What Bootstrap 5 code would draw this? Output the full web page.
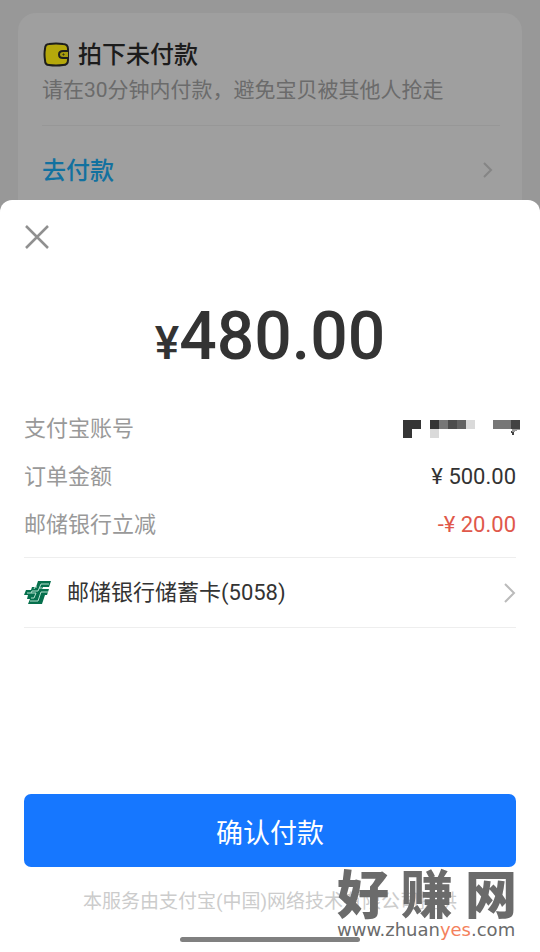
<!DOCTYPE html>
<html lang="zh-CN">
<head>
<meta charset="utf-8">
<meta name="viewport" content="width=device-width, initial-scale=1">
<title>确认付款</title>
<link href="https://cdn.jsdelivr.net/npm/bootstrap@5.3.0/dist/css/bootstrap.min.css" rel="stylesheet">
<style>
  body { background: #989898; font-family: Roboto, "Noto Sans CJK SC", sans-serif; color: #333; }
  svg { display: block; flex: none; }
  .order-card { background: #9f9f9f; border-radius: 18px; margin: 13px 18px 0; padding: 25px 22px 30px 24px; }
  .order-title { font-size: 24px; line-height: 34px; font-weight: 500; color: #1c1c1c; gap: 8px; }
  .order-note { font-size: 21px; line-height: 36px; color: #6b6b6b; border-bottom: 1px solid #979797; padding-bottom: 17px; }
  .order-link { font-size: 24px; line-height: 36px; font-weight: 500; color: #12719f; padding-top: 27px; }
  .pay-sheet { background: #fff; border-radius: 12px 12px 0 0; margin-top: -19px; padding: 24px 24px 10px; }
  .close-btn { width: 26px; height: 26px; }
  .pay-amount { font-size: 66px; line-height: 80px; font-weight: 500; margin-top: 47px; margin-bottom: 22px; }
  .pay-amount small { font-size: 46px; }
  .pay-row { font-size: 22px; line-height: 48px; }
  .pay-row dt { color: #999; }
  .discount { color: #e0584b; }
  .mosaic { margin-right: -4px; }
  .bank-btn { border-top: 1px solid #eee !important; border-bottom: 1px solid #eee !important; margin-top: 8px; font-size: 22px; line-height: 69px; gap: 16px; color: #333; }
  .confirm-btn { background: #1677ff; font-size: 27px; line-height: 33px; padding: 24px 0 16px; border-radius: 7px; color: #fff; }
  .provider { font-size: 19px; line-height: 30px; color: #ccc; margin-top: 20px; margin-bottom: 20px; }
  .home-bar { width: 180px; height: 5px; border-radius: 3px; background: #808080; }
  .site-mark { right: 23px; bottom: 13px; color: #6b6b6b; }
  .site-name { font-size: 52px; line-height: 48px; font-weight: 900; gap: 12px; }
  .site-url { font: 18px/18px "DejaVu Sans", sans-serif; }
  .site-url b { font-weight: 400; color: #f4815c; }
</style>
</head>
<body class="d-flex flex-column min-vh-100 position-relative">
<section class="order-card">
  <h1 class="order-title d-flex align-items-center mb-0">
    <svg width="28" height="26" viewBox="0 0 28 26" fill="none" stroke="#1e1e1c" stroke-width="2"><path d="M7 2Q14 1 21 2Q26 2 26 7V18Q26 23 21 23Q14 24 7 23Q3 23 3 18Q2 12 3 7Q3 2 7 2Z" fill="#b5a80b"/><path d="M26 9H21Q17 9 17 12.500T21 16H26" fill="#a59a0e"/><circle cx="21.500" cy="12.500" r=".6" stroke-width="1"/></svg>
    拍下未付款
  </h1>
  <p class="order-note mb-0">请在30分钟内付款，避免宝贝被其他人抢走</p>
  <a href="#pay" class="order-link d-flex justify-content-between align-items-center text-decoration-none">去付款
    <svg width="18" height="18" viewBox="0 0 18 18" fill="none" stroke="#858585" stroke-width="2"><path d="M2 1L9 8L2 15"/></svg>
  </a>
</section>
<main id="pay" class="pay-sheet position-relative d-flex flex-column flex-grow-1">
  <button type="button" class="close-btn btn p-0 border-0" aria-label="关闭">
    <svg width="26" height="26" viewBox="0 0 26 26" fill="none" stroke="#909090" stroke-width="2.500"><path d="M2 2L24 24M24 2L2 24"/></svg>
  </button>
  <p class="pay-amount text-center"><small>¥</small>480.00</p>
  <dl class="mb-0">
    <div class="pay-row d-flex justify-content-between align-items-center">
      <dt class="fw-normal">支付宝账号</dt>
      <dd class="mb-0">
        <svg class="mosaic" width="117" height="18" viewBox="0 0 117 18" shape-rendering="crispEdges" role="img" aria-label="已隐藏"><path fill="#353535" d="M0 0H18V9H9V18H0ZM27 0H36V9H27Z"/><path fill="#777" d="M36 0H45V9H36ZM90 0H108V9H90Z"/><path fill="#4c4c4c" d="M45 0H54V9H45Z"/><path fill="#626262" d="M54 0H63V9H54Z"/><path fill="#dadada" d="M63 0H72V9H63ZM27 9H36V18H27Z"/><path fill="#434343" d="M108 0H117V9H108ZM108 11H111V15H109V13H108Z"/><path fill="#999" d="M109 9H117V10H114V11H112V12H109Z"/></svg>
      </dd>
    </div>
    <div class="pay-row d-flex justify-content-between"><dt class="fw-normal">订单金额</dt><dd class="mb-0">¥ 500.00</dd></div>
    <div class="pay-row d-flex justify-content-between"><dt class="fw-normal">邮储银行立减</dt><dd class="mb-0 discount">-¥ 20.00</dd></div>
  </dl>
  <button type="button" class="bank-btn btn d-flex align-items-center w-100 p-0 border-0 rounded-0 text-start">
    <svg width="27" height="24" viewBox="0 0 27 24"><path fill="#06704d" d="M14 0H27L25 6H19L18 8H25L23 14H21L18 23H4L6 18H3L4 14H0L2 9H7L8 6H12Z"/><path fill="none" stroke="#b5e0cf" stroke-width="1" d="M25 3H17L14 10H8L7 12M13 6H11L10 8M24 11H17L14 20H6M3 12H12L10 17H7M15 7H18"/></svg>
    <span class="flex-grow-1">邮储银行储蓄卡(5058)</span>
    <svg width="14" height="22" viewBox="0 0 14 22" fill="none" stroke="#bbb" stroke-width="2"><path d="M3 2L12 11L3 20"/></svg>
  </button>
  <button type="button" class="confirm-btn btn w-100 border-0 mt-auto">确认付款</button>
  <p class="provider text-center">本服务由支付宝(中国)网络技术有限公司提供</p>
  <div class="home-bar mx-auto"></div>
</main>
<div class="site-mark position-absolute">
  <div class="site-name d-flex"><span>好</span><span>赚</span><span>网</span></div>
  <div class="site-url">www.zhuan<b>yes</b>.com</div>
</div>
<script src="https://cdn.jsdelivr.net/npm/bootstrap@5.3.0/dist/js/bootstrap.bundle.min.js"></script>
</body>
</html>
